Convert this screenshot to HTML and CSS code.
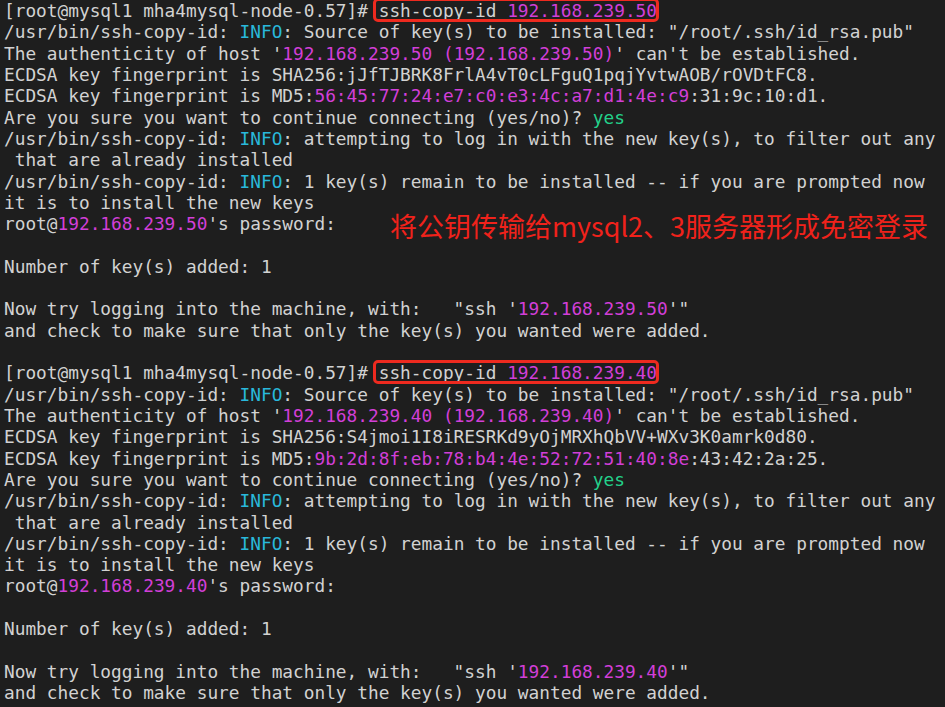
FILE: index.html
```html
<!DOCTYPE html>
<html lang="zh-CN">
<head>
<meta charset="utf-8">
<title>ssh-copy-id</title>
<link rel="stylesheet" href="styles.css">
</head>
<body>
<main class="screen">
<pre class="term">[root@mysql1 mha4mysql-node-0.57]# <span class="boxed">ssh-copy-id <span class="m">192.168.239.50</span></span>
/usr/bin/ssh-copy-id: <span class="c">INFO</span>: Source of key(s) to be installed: "/root/.ssh/id_rsa.pub"
The authenticity of host '<span class="m">192.168.239.50 (192.168.239.50)</span>' can't be established.
ECDSA key fingerprint is SHA256:jJfTJBRK8FrlA4vT0cLFguQ1pqjYvtwAOB/rOVDtFC8.
ECDSA key fingerprint is MD5:<span class="m">56:45:77:24:e7:c0:e3:4c:a7:d1:4e:c9</span>:31:9c:10:d1.
Are you sure you want to continue connecting (yes/no)? <span class="g">yes</span>
/usr/bin/ssh-copy-id: <span class="c">INFO</span>: attempting to log in with the new key(s), to filter out any
 that are already installed
/usr/bin/ssh-copy-id: <span class="c">INFO</span>: 1 key(s) remain to be installed -- if you are prompted now
it is to install the new keys
<span class="note-line">root@<span class="m">192.168.239.50</span>'s password:<span class="note">将公钥传输给mysql2、3服务器形成免密登录</span></span>

Number of key(s) added: 1

Now try logging into the machine, with:   "ssh '<span class="m">192.168.239.50</span>'"
and check to make sure that only the key(s) you wanted were added.

[root@mysql1 mha4mysql-node-0.57]# <span class="boxed">ssh-copy-id <span class="m">192.168.239.40</span></span>
/usr/bin/ssh-copy-id: <span class="c">INFO</span>: Source of key(s) to be installed: "/root/.ssh/id_rsa.pub"
The authenticity of host '<span class="m">192.168.239.40 (192.168.239.40)</span>' can't be established.
ECDSA key fingerprint is SHA256:S4jmoi1I8iRESRKd9yOjMRXhQbVV+WXv3K0amrk0d80.
ECDSA key fingerprint is MD5:<span class="m">9b:2d:8f:eb:78:b4:4e:52:72:51:40:8e</span>:43:42:2a:25.
Are you sure you want to continue connecting (yes/no)? <span class="g">yes</span>
/usr/bin/ssh-copy-id: <span class="c">INFO</span>: attempting to log in with the new key(s), to filter out any
 that are already installed
/usr/bin/ssh-copy-id: <span class="c">INFO</span>: 1 key(s) remain to be installed -- if you are prompted now
it is to install the new keys
root@<span class="m">192.168.239.40</span>'s password:

Number of key(s) added: 1

Now try logging into the machine, with:   "ssh '<span class="m">192.168.239.40</span>'"
and check to make sure that only the key(s) you wanted were added.
</pre>
</main>
</body>
</html>
```

FILE: styles.css
```css
html, body {
  margin: 0;
  padding: 0;
  background: #1e1e1e;
}

.screen {
  position: relative;
  width: 945px;
  height: 707px;
  overflow: hidden;
  background: #1e1e1e;
}

.term {
  margin: 0;
  padding: 0 0 0 4px;
  font-family: "DejaVu Sans Mono", "Liberation Mono", monospace;
  font-size: 17.8px;
  line-height: 21.31px;
  color: #d2d2d2;
  white-space: pre;
}

.m { color: #d23fd8; }
.c { color: #29b8db; }
.g { color: #23d18b; }

.boxed {
  position: relative;
}

.boxed::after {
  content: "";
  position: absolute;
  left: -6px;
  right: -2px;
  top: -2px;
  bottom: -1px;
  border: 3px solid #ee2a1f;
  border-radius: 5px;
}

.note-line {
  position: relative;
}

.note {
  position: absolute;
  left: 386px;
  top: -1px;
  font-family: "Noto Sans CJK SC", "Noto Sans", sans-serif;
  font-size: 27px;
  line-height: 27px;
  color: #f0221b;
  white-space: nowrap;
}
```
